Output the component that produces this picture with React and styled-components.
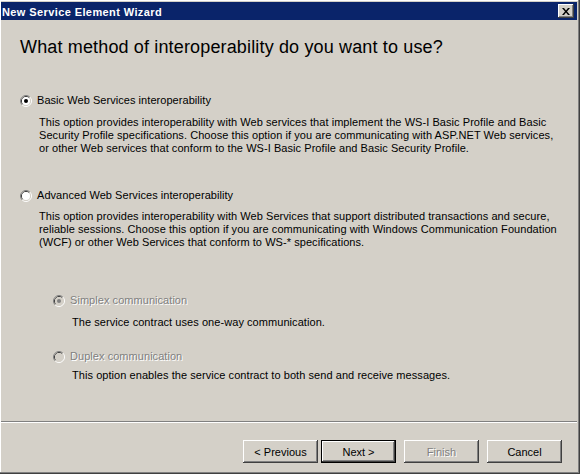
import * as React from 'react'
import styled, { createGlobalStyle } from 'styled-components'

const GlobalStyle = createGlobalStyle`
  html, body {
    margin: 0;
    padding: 0;
    background: #d4d0c8;
  }
  body {
    font-family: 'Liberation Sans', Arial, sans-serif;
    font-size: 11px;
    color: #000;
  }
`

function Radio ({ checked, disabled }) {
  const fill = disabled ? '#d4d0c8' : '#fff'
  const dot = disabled ? '#808080' : '#000'
  return (
    <RadioBox width='12' height='12' viewBox='0 0 12 12'>
      <path d='M2.11 9.89 A5.5 5.5 0 0 1 9.89 2.11' fill='none' stroke='#808080' />
      <path d='M9.89 2.11 A5.5 5.5 0 0 1 2.11 9.89' fill='none' stroke='#fff' />
      <path d='M2.82 9.18 A4.5 4.5 0 0 1 9.18 2.82' fill='none' stroke='#404040' />
      <path d='M9.18 2.82 A4.5 4.5 0 0 1 2.82 9.18' fill='none' stroke='#d4d0c8' />
      <circle cx='6' cy='6' r='4' fill={fill} />
      {checked && <circle cx='6' cy='6' r='2' fill={dot} />}
    </RadioBox>
  )
}

function Option ({ label, lines, checked, disabled, indent, gap, top }) {
  return (
    <OptionBlock indent={indent} top={top}>
      <OptionRow>
        <Radio checked={checked} disabled={disabled} />
        <Label disabled={disabled}>{label}</Label>
      </OptionRow>
      <Description gap={gap}>
        {lines.map(line => <div key={line}>{line}</div>)}
      </Description>
    </OptionBlock>
  )
}

export default function App () {
  return (
    <>
      <GlobalStyle />
      <Window>
        <TitleBar>
          <span>New Service Element Wizard</span>
          <CloseButton>
            <svg width='8' height='7' viewBox='0 0 8 7'>
              <path d='M0 0h2l2 2.5 2-2.5h2L5 3.5 8 7H6L4 4.5 2 7H0l3-3.5z' fill='#000' />
            </svg>
          </CloseButton>
        </TitleBar>
        <Body>
          <Heading>What method of interoperability do you want to use?</Heading>
          <Option
            top={36}
            gap={9}
            checked
            label='Basic Web Services interoperability'
            lines={[
              'This option provides interoperability with Web services that implement the WS-I Basic Profile and Basic',
              'Security Profile specifications. Choose this option if you are communicating with ASP.NET Web services,',
              'or other Web services that conform to the WS-I Basic Profile and Basic Security Profile.'
            ]}
          />
          <Option
            top={34}
            gap={8}
            label='Advanced Web Services interoperability'
            lines={[
              'This option provides interoperability with Web Services that support distributed transactions and secure,',
              'reliable sessions. Choose this option if you are communicating with Windows Communication Foundation',
              '(WCF) or other Web Services that conform to WS-* specifications.'
            ]}
          />
          <Option
            top={45}
            gap={9}
            indent
            checked
            disabled
            label='Simplex communication'
            lines={['The service contract uses one-way communication.']}
          />
          <Option
            top={21}
            gap={6}
            indent
            disabled
            label='Duplex communication'
            lines={['This option enables the service contract to both send and receive messages.']}
          />
        </Body>
        <Separator />
        <Footer>
          <Button>&lt; Previous</Button>
          <Button isDefault>Next &gt;</Button>
          <Button disabled spaced>Finish</Button>
          <Button spaced>Cancel</Button>
        </Footer>
      </Window>
    </>
  )
}

const Window = styled.div`
  width: 580px;
  height: 474px;
  box-sizing: border-box;
  padding: 2px 3px 2px 1px;
  display: flex;
  flex-direction: column;
  background: #d4d0c8;
  box-shadow: inset -1px -1px #404040, inset -2px -2px #808080, inset 1px 1px #fff;
`

const TitleBar = styled.div`
  height: 18px;
  flex: none;
  background: #0a246a;
  color: #fff;
  font-weight: bold;
  font-size: 11px;
  letter-spacing: 0.4px;
  display: flex;
  align-items: center;
  justify-content: space-between;
  padding: 0 3px 0 1px;
  > span {
    line-height: 18px;
    padding-top: 1px;
  }
`

const CloseButton = styled.div`
  width: 16px;
  height: 14px;
  box-sizing: border-box;
  background: #d4d0c8;
  display: flex;
  align-items: center;
  justify-content: center;
  box-shadow: inset -1px -1px #404040, inset 1px 1px #fff, inset -2px -2px #808080;
`

const Body = styled.div`
  flex: 1;
  padding: 16px 0 0 19px;
`

const Heading = styled.div`
  font-size: 18px;
  line-height: 22px;
  letter-spacing: 0.15px;
  white-space: nowrap;
`

const OptionBlock = styled.div`
  margin-top: ${props => props.top}px;
  margin-left: ${props => props.indent ? 33 : 0}px;
`

const OptionRow = styled.div`
  display: flex;
  align-items: center;
  height: 13px;
  gap: 5px;
`

const RadioBox = styled.svg`
  flex: none;
  display: block;
`

const Label = styled.span`
  line-height: 13px;
  white-space: nowrap;
  letter-spacing: 0.05px;
  color: ${props => props.disabled ? '#808080' : '#000'};
  text-shadow: ${props => props.disabled ? '1px 1px 0 #fff' : 'none'};
`

const Description = styled.div`
  margin-top: ${props => props.gap}px;
  margin-left: 19px;
  line-height: 13px;
  letter-spacing: 0.06px;
  white-space: nowrap;
`

const Separator = styled.div`
  flex: none;
  height: 1px;
  background: #808080;
  border-bottom: 1px solid #fff;
`

const Footer = styled.div`
  flex: none;
  height: 49px;
  box-sizing: border-box;
  padding: 17px 15px 0 0;
  display: flex;
  justify-content: flex-end;
  align-items: flex-start;
  gap: 3px;
`

const Button = styled.div`
  width: 75px;
  height: 23px;
  box-sizing: border-box;
  margin-left: ${props => props.spaced ? 5 : 0}px;
  display: flex;
  align-items: center;
  justify-content: center;
  font-size: 11px;
  border: ${props => props.isDefault ? '1px solid #000' : 'none'};
  box-shadow: inset -1px -1px #404040, inset 1px 1px #fff, inset -2px -2px #808080;
  color: ${props => props.disabled ? '#808080' : '#000'};
  text-shadow: ${props => props.disabled ? '1px 1px 0 #fff' : 'none'};
`
